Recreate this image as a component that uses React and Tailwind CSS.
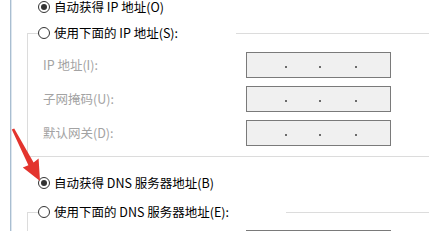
import React from 'react';

function Radio({ label, checked }) {
  return (
    <div className="flex items-center gap-[4px] h-[14px]">
      <span className="w-[12px] h-[12px] shrink-0 rounded-full border border-[#333] bg-white flex items-center justify-center">
        {checked && <span className="w-[6px] h-[6px] rounded-full bg-[#333]" />}
      </span>
      <span className="whitespace-nowrap">{label}</span>
    </div>
  );
}

function IpField({ label }) {
  return (
    <div className="flex items-center h-[26px]">
      <span className="w-[203px] shrink-0 text-[#a3a3a3] whitespace-nowrap">{label}</span>
      <div className="w-[145px] h-[26px] shrink-0 border border-[#7a7a7a] bg-[#f0f0f0] flex items-center pl-[38px]">
        <span className="w-[2px] h-[2px] mt-[3px] bg-[#6b6b6b]" />
        <span className="w-[2px] h-[2px] mt-[3px] ml-[32px] bg-[#6b6b6b]" />
        <span className="w-[2px] h-[2px] mt-[3px] ml-[34px] bg-[#6b6b6b]" />
      </div>
    </div>
  );
}

export default function App() {
  return (
    <div className="relative w-[429px] h-[231px] overflow-hidden bg-white text-[12.5px] leading-[14px] text-[#000] font-['Noto_Sans_CJK_SC','Microsoft_YaHei',sans-serif]">
      <div className="flex h-full">
        <div className="w-[10px] shrink-0" />
        <div className="w-px shrink-0 bg-[#a9bed1]" />
        <div className="w-px shrink-0 bg-[#dde6ee]" />
        <div className="flex-1 min-w-0">
          {/* IP group */}
          <div className="pl-[26px]">
            <Radio checked label="自动获得 IP 地址(O)" />
          </div>
          <fieldset className="ml-[15px] mt-[12px] border-t border-l border-b border-[#dcdcdc] pl-[10px] pb-[10px]">
            <legend className="w-[198px]">
              <Radio label="使用下面的 IP 地址(S):" />
            </legend>
            <div className="pt-[12px] pl-[5px] flex flex-col gap-[8px]">
              <IpField label="IP 地址(I):" />
              <IpField label="子网掩码(U):" />
              <IpField label="默认网关(D):" />
            </div>
          </fieldset>

          {/* DNS group */}
          <div className="pl-[26px] mt-[19px]">
            <Radio checked label="自动获得 DNS 服务器地址(B)" />
          </div>
          <fieldset className="ml-[15px] mt-[15px] border-t border-l border-[#dcdcdc] pl-[10px]">
            <legend className="w-[248px]">
              <Radio label="使用下面的 DNS 服务器地址(E):" />
            </legend>
            <div className="pt-[11px] pl-[5px] flex flex-col gap-[8px]">
              <IpField label="首选 DNS 服务器(P):" />
            </div>
          </fieldset>
        </div>
      </div>

      {/* red arrow */}
      <svg className="absolute left-0 top-0 pointer-events-none" width="429" height="231" viewBox="0 0 429 231">
        <polygon
          points="11.8,129.6 14.2,128.4 33.6,162.4 38.6,158.6 40,181 22.8,167.6 28.4,165.2"
          fill="#e3342e"
        />
      </svg>
    </div>
  );
}
